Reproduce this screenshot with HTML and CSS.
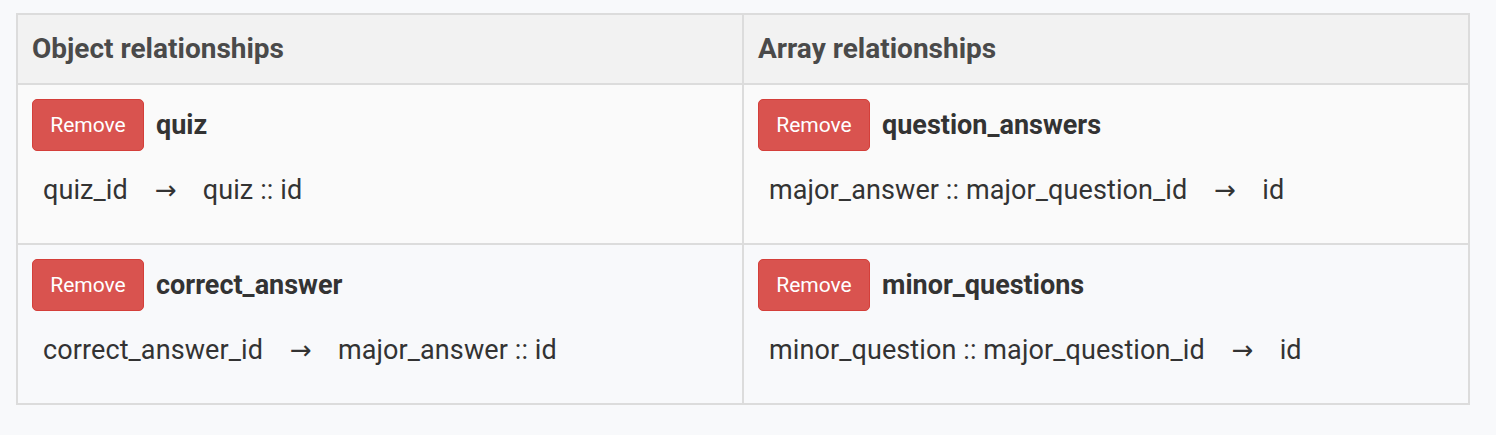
FILE: index.html
```html
<!DOCTYPE html>
<html>
<head>
<meta charset="utf-8">
<link rel="stylesheet" href="styles.css">
</head>
<body>
<div class="page">
  <table class="rel-table">
    <thead>
      <tr>
        <th>Object relationships</th>
        <th>Array relationships</th>
      </tr>
    </thead>
    <tbody>
      <tr class="row-odd">
        <td>
          <div class="rel-head"><button class="btn-remove">Remove</button><b class="rel-name">quiz</b></div>
          <div class="rel-map">quiz_id<span class="arrow">→</span>quiz :: id</div>
        </td>
        <td>
          <div class="rel-head"><button class="btn-remove">Remove</button><b class="rel-name">question_answers</b></div>
          <div class="rel-map">major_answer :: major_question_id<span class="arrow">→</span>id</div>
        </td>
      </tr>
      <tr class="row-even">
        <td>
          <div class="rel-head"><button class="btn-remove">Remove</button><b class="rel-name">correct_answer</b></div>
          <div class="rel-map">correct_answer_id<span class="arrow">→</span>major_answer :: id</div>
        </td>
        <td>
          <div class="rel-head"><button class="btn-remove">Remove</button><b class="rel-name">minor_questions</b></div>
          <div class="rel-map">minor_question :: major_question_id<span class="arrow">→</span>id</div>
        </td>
      </tr>
    </tbody>
  </table>
</div>
</body>
</html>
```

FILE: styles.css
```css
html, body {
  margin: 0;
  padding: 0;
  background: #f8f9fb;
}
body {
  font-family: Roboto, "Noto Sans", "DejaVu Sans", sans-serif;
  color: #333;
}
.page {
  padding: 13px 0 0 16px;
}
.rel-table {
  width: 1454px;
  border-collapse: collapse;
  table-layout: fixed;
  border: 2px solid #dcdcdc;
}
.rel-table th,
.rel-table td {
  border: 2px solid #dcdcdc;
  text-align: left;
  vertical-align: top;
}
.rel-table th {
  background: #f2f2f2;
  height: 68px;
  padding: 0 14px;
  font-size: 28px;
  line-height: 68px;
  font-weight: 700;
  color: #4a4a4a;
  box-sizing: content-box;
}
.rel-table td {
  height: 160px;
  padding: 0 14px;
  box-sizing: border-box;
}
.row-odd td {
  background: #fafafa;
}
.row-even td {
  background: #f8f9fb;
}
.rel-head {
  display: flex;
  align-items: center;
  gap: 12px;
  margin-top: 14px;
}
.btn-remove {
  height: 52px;
  width: 112px;
  padding: 0;
  border: 1px solid #d43f3a;
  border-radius: 5px;
  background: #d9534f;
  color: #fff;
  font-family: Roboto, "Noto Sans", sans-serif;
  font-size: 21px;
}
.rel-name {
  font-size: 27px;
  font-weight: 700;
  color: #333;
}
.rel-map {
  margin-top: 19px;
  padding-left: 11px;
  font-size: 27px;
  line-height: 40px;
  color: #333;
  letter-spacing: 0.1px;
}
.arrow {
  display: inline-block;
  margin: 0 26px 0 27px;
  font-family: "DejaVu Sans", sans-serif;
  font-size: 26px;
  line-height: 40px;
  vertical-align: top;
}
```
